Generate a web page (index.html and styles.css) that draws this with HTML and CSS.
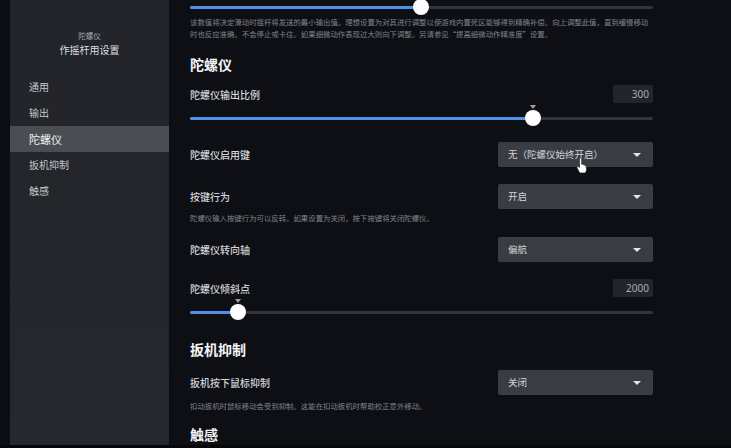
FILE: index.html
```html
<!DOCTYPE html>
<html lang="zh-CN">
<head>
  <meta charset="UTF-8" />
  <meta name="viewport" content="width=device-width, initial-scale=1.0"/>
  <title>作摇杆用设置</title>
  <link rel="stylesheet" href="styles.css">
</head>
<body>

  <div class="app">
    <div class="edge"></div>

    <aside class="sidebar">
      <div class="side-sub">陀螺仪</div>
      <div class="side-title">作摇杆用设置</div>
      <nav class="nav">
        <div class="nav-item">通用</div>
        <div class="nav-item">输出</div>
        <div class="nav-item active">陀螺仪</div>
        <div class="nav-item">扳机抑制</div>
        <div class="nav-item">触感</div>
      </nav>
    </aside>

    <main class="main">
      <div class="slider">
        <div class="track">
          <div class="fill" style="width: 49.9%"></div>
          <div class="knob" style="left: 49.9%"></div>
        </div>
      </div>
      <p class="desc desc-top">该数值将决定滑动时摇杆将发送的最小输出值。理想设置为对其进行调整以使游戏内置死区能够得到精确补偿。向上调整此值，直到缓慢移动时也反应准确，不会停止或卡住。如果细微动作表现过大则向下调整。另请参见“提高细微动作精准度”设置。</p>

      <h2 class="section h-gyro">陀螺仪</h2>

      <div class="row value-row r-scale">
        <span class="label">陀螺仪输出比例</span>
        <span class="value">300</span>
      </div>
      <div class="slider s-scale">
        <div class="track">
          <div class="fill" style="width: 74.1%"></div>
          <div class="knob marked" style="left: 74.1%"></div>
        </div>
      </div>

      <div class="row r-enable">
        <span class="label">陀螺仪启用键</span>
        <div class="select">无（陀螺仪始终开启）<span class="caret"></span></div>
      </div>

      <div class="row r-behavior">
        <span class="label">按键行为</span>
        <div class="select">开启<span class="caret"></span></div>
      </div>
      <p class="desc d-behavior">陀螺仪输入按键行为可以反转。如果设置为关闭，按下按键将关闭陀螺仪。</p>

      <div class="row r-axis">
        <span class="label">陀螺仪转向轴</span>
        <div class="select">偏航<span class="caret"></span></div>
      </div>

      <div class="row value-row r-tilt">
        <span class="label">陀螺仪倾斜点</span>
        <span class="value">2000</span>
      </div>
      <div class="slider s-tilt">
        <div class="track">
          <div class="fill" style="width: 10.4%"></div>
          <div class="knob marked" style="left: 10.4%"></div>
        </div>
      </div>

      <h2 class="section h-trigger">扳机抑制</h2>

      <div class="row r-trigger">
        <span class="label">扳机按下鼠标抑制</span>
        <div class="select">关闭<span class="caret"></span></div>
      </div>
      <p class="desc d-trigger">扣动扳机时鼠标移动会受到抑制。这能在扣动扳机时帮助校正意外移动。</p>

      <h2 class="section h-haptic">触感</h2>

      <!-- pointer hovering the enable-key dropdown -->
      <svg class="cursor" width="12" height="15" viewBox="0 0 12 15">
        <path d="M3.5 1.2c0-.7.5-1.2 1.1-1.2s1.1.5 1.1 1.2v5l.4-.1c.6-.1 1.100.2 1.3.7l.2-.1c.6-.1 1.1.2 1.3.7.6-.1 1.2.3 1.3.9l.3 2.8c.1 1.5-.4 2.9-1.4 3.9H3.8L1.3 10.4C.9 9.900.9 9.2 1.4 8.8c.5-.4 1.2-.3 1.6.1l.5.6z" fill="#fff" stroke="#222" stroke-width=".7"/>
      </svg>
    </main>
  </div>

</body>
</html>
```

FILE: styles.css
```css
* {
  box-sizing: border-box;
}

body {
  margin: 0;
  background: #06070a;
  font-family: "Noto Sans CJK SC", "Noto Sans", sans-serif;
  color: #c9ccd1;
  overflow: hidden;
}

.app {
  display: flex;
  width: 731px;
  height: 445px;
  overflow: hidden;
}

.edge {
  flex-shrink: 0;
  width: 10px;
  background: #0c0e13;
}

/* left menu */
.sidebar {
  flex-shrink: 0;
  width: 159px;
  background: linear-gradient(#222429, #25282e);
  padding-top: 30px;
}

.side-sub {
  text-align: center;
  font-size: 7.5px;
  line-height: 12px;
  color: #a4a7ad;
}

.side-title {
  text-align: center;
  font-size: 10px;
  line-height: 14px;
  margin-top: 1px;
  color: #dcdee2;
}

.nav {
  margin-top: 17px;
}

.nav-item {
  height: 26px;
  line-height: 26px;
  padding-left: 19px;
  font-size: 10px;
  color: #c3c6cb;
}

.nav-item.active {
  background: #4a4d53;
  color: #f2f3f5;
  font-size: 11px;
}

/* settings column */
.main {
  position: relative;
  flex: 1;
  min-width: 0;
  background: #0d0f15;
  padding: 0 78px 0 21px;
}

.slider {
  height: 14px;
  display: flex;
  align-items: center;
}

.track {
  position: relative;
  width: 100%;
  height: 3px;
  border-radius: 2px;
  background: #31343a;
}

.fill {
  height: 100%;
  border-radius: 2px;
  background: #4d92ea;
}

.knob {
  position: absolute;
  top: 50%;
  width: 16px;
  height: 16px;
  margin: -8px 0 0 -8px;
  border-radius: 50%;
  background: #ffffff;
}

.knob.marked::before {
  content: "";
  position: absolute;
  left: 5px;
  top: -5px;
  border-left: 3px solid transparent;
  border-right: 3px solid transparent;
  border-top: 4px solid #9c9fa5;
}

.desc {
  margin: 0;
  font-size: 7.4px;
  line-height: 12px;
  color: #80848c;
}

.desc-top {
  margin-top: 2px;
}

.section {
  margin: 0;
  font-size: 14px;
  line-height: 20px;
  font-weight: bold;
  color: #f4f5f7;
}

.h-gyro {
  margin-top: 14px;
}

.h-trigger {
  margin-top: 20px;
}

.h-haptic {
  margin-top: 12px;
}

.row {
  display: flex;
  justify-content: space-between;
  align-items: center;
  height: 25px;
}

.value-row {
  height: 18px;
}

.label {
  font-size: 10px;
  font-weight: 500;
  color: #d2d5d9;
}

.value {
  width: 40px;
  height: 18px;
  line-height: 18px;
  padding-right: 4px;
  text-align: right;
  background: #22252b;
  border-radius: 2px;
  font-family: "Noto Sans", sans-serif;
  font-size: 10px;
  color: #a9acb2;
}

.select {
  position: relative;
  width: 155px;
  height: 25px;
  line-height: 25px;
  padding-left: 10px;
  background: #393c42;
  border-radius: 2px;
  font-size: 9.5px;
  color: #d3d5d9;
}

.caret {
  position: absolute;
  right: 12px;
  top: 11px;
  border-left: 4px solid transparent;
  border-right: 4px solid transparent;
  border-top: 4px solid #e4e6e9;
}

.r-scale {
  margin-top: 11px;
}

.s-scale {
  margin-top: 8px;
}

.r-enable {
  margin-top: 17px;
}

.r-behavior {
  margin-top: 17px;
}

.d-behavior {
  margin-top: 3px;
}

.r-axis {
  margin-top: 13px;
}

.r-tilt {
  margin-top: 17px;
}

.s-tilt {
  margin-top: 8px;
}

.r-trigger {
  margin-top: 11px;
}

.d-trigger {
  margin-top: 5px;
}

.cursor {
  position: absolute;
  left: 407px;
  top: 158px;
}
```
